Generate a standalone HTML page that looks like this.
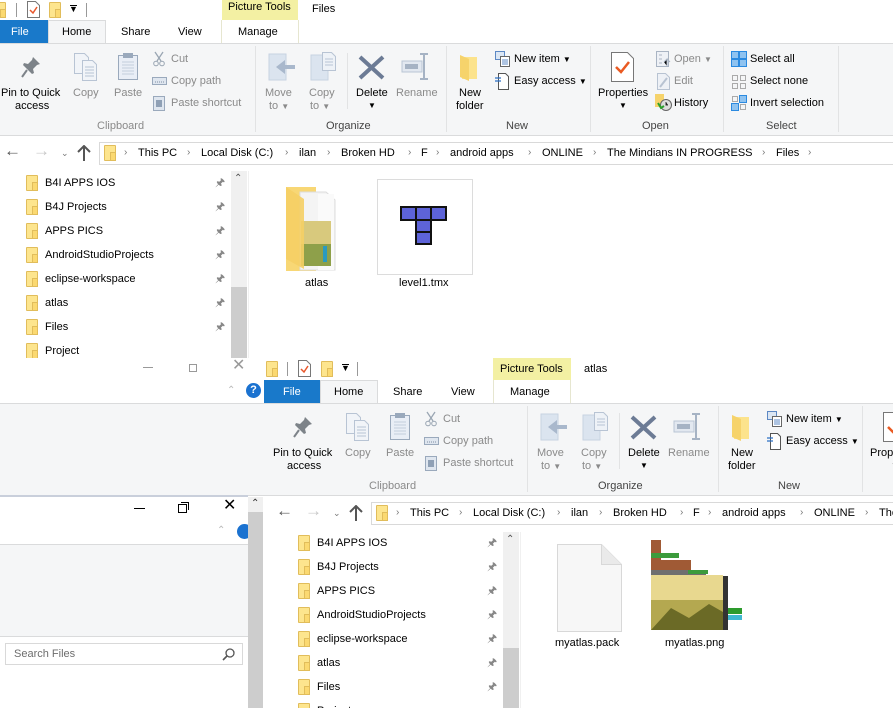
<!DOCTYPE html>
<html><head><meta charset="utf-8">
<style>
*{margin:0;padding:0;box-sizing:border-box}
body{width:893px;height:708px;overflow:hidden;background:#fff;position:relative;font-family:"Liberation Sans",sans-serif;font-size:11px;color:#000}
.a{position:absolute}
.t{position:absolute;white-space:nowrap;font-size:11px;line-height:14px}
.g{color:#8a8a8a}
.win{position:absolute;overflow:hidden}
.fold{position:absolute;width:12px;height:16px;background:#fde58e;border:1px solid #e1bd5b;border-radius:1px}
.fold:after{content:"";position:absolute;right:-1px;bottom:-1px;width:4px;height:7px;border:1px solid #e1bd5b;background:#fbd971}
.chev{position:absolute;font-size:10px;color:#777;line-height:14px}
.sep{position:absolute;width:1px;background:#e2e3e4}
</style></head><body>

<div class="win" style="left:0;top:0;width:893px;height:358px">
 <div class="a" style="left:0;top:0;width:893px;height:43px;background:#fff"></div>
 <div class="fold" style="left:-6px;top:2px"></div>
 <div class="a" style="left:16px;top:3px;width:1px;height:14px;background:#999"></div>
 <svg class="a" style="left:27px;top:1px" width="13" height="17"><path d="M.5 .5h8l4 4v12H.5z" fill="#fff" stroke="#777"/><path d="M3 9l3 3 4-6" fill="none" stroke="#e8562a" stroke-width="1.5"/></svg>
 <div class="fold" style="left:49px;top:2px"></div>
 <div class="t" style="left:69px;top:2px;font-size:9px">&#9660;</div>
 <div class="a" style="left:70px;top:5px;width:7px;height:1px;background:#000"></div>
 <div class="a" style="left:86px;top:3px;width:1px;height:14px;background:#999"></div>
 <div class="a" style="left:222px;top:0;width:76px;height:20px;background:#f3f0a3"></div>
 <div class="t" style="left:228px;top:0">Picture Tools</div>
 <div class="t" style="left:312px;top:2px">Files</div>
 <div class="a" style="left:0;top:20px;width:48px;height:23px;background:#1979ca"></div>
 <div class="t" style="left:11px;top:25px;color:#fff">File</div>
 <div class="a" style="left:48px;top:20px;width:58px;height:24px;background:#f5f6f7;border:1px solid #dadbdc;border-bottom:none"></div>
 <div class="t" style="left:62px;top:25px">Home</div>
 <div class="t" style="left:121px;top:25px">Share</div>
 <div class="t" style="left:178px;top:25px">View</div>
 <div class="a" style="left:221px;top:20px;width:78px;height:23px;border-left:1px solid #e6e6d0;border-right:1px solid #e6e6d0"></div>
 <div class="t" style="left:238px;top:25px">Manage</div>
 <div class="a" style="left:0;top:43px;width:893px;height:93px;background:#f5f6f7;border-top:1px solid #dadbdc;border-bottom:1px solid #dadbdc"></div>
 <div id="rib" class="a" style="left:0;top:0;width:893px;height:136px">
  <svg class="a" style="left:20px;top:55px" width="22" height="24"><path d="M13 2l7 7-3 1-4 4 1 4-2 1-9-9 1-2 4 1 4-4z" fill="#7d8389"/><path d="M7 15l-5 7" stroke="#7d8389" stroke-width="2"/></svg>
  <div class="t" style="left:1px;top:86px">Pin to Quick</div>
  <div class="t" style="left:15px;top:99px">access</div>
  <svg class="a" style="left:73px;top:52px" width="26" height="30"><path d="M1.5 1.5h10l4 4v16h-14z" fill="#f1f4f8" stroke="#b8c4d4"/><path d="M9.5 8.5h10l4 4v16h-14z" fill="#f1f4f8" stroke="#b8c4d4"/><path d="M12 15h9M12 18h9M12 21h9M12 24h9" stroke="#b8c4d4"/></svg>
  <div class="t g" style="left:73px;top:86px">Copy</div>
  <svg class="a" style="left:117px;top:52px" width="22" height="29"><rect x="1.5" y="3.5" width="19" height="24" fill="#e9eef6" stroke="#9aa9bc"/><rect x="6" y="1" width="10" height="5" fill="#9aa9bc"/><path d="M5 10h12M5 13h12M5 16h12M5 19h12M5 22h12" stroke="#c4cfdc"/></svg>
  <div class="t g" style="left:114px;top:86px">Paste</div>
  <svg class="a" style="left:153px;top:51px" width="12" height="16"><path d="M2 1l6 9M10 1L4 10" stroke="#9aa6b3" stroke-width="1.3"/><circle cx="3" cy="12.5" r="2.3" fill="none" stroke="#9aa6b3"/><circle cx="9" cy="12.5" r="2.3" fill="none" stroke="#9aa6b3"/></svg>
  <div class="t g" style="left:171px;top:52px">Cut</div>
  <svg class="a" style="left:152px;top:77px" width="15" height="8"><rect x=".5" y=".5" width="14" height="7" fill="#dfe6ef" stroke="#9aa9bc"/><path d="M3 5h9" stroke="#7f8ea3" stroke-dasharray="1 1"/></svg>
  <div class="t g" style="left:171px;top:74px">Copy path</div>
  <svg class="a" style="left:153px;top:95px" width="12" height="16"><rect x=".5" y="1.5" width="11" height="14" fill="#dfe6ef" stroke="#9aa9bc"/><rect x="3" y="5" width="6" height="7" fill="#8fa0b5"/></svg>
  <div class="t g" style="left:171px;top:96px">Paste shortcut</div>
  <div class="t g" style="left:97px;top:119px">Clipboard</div>
  <div class="sep" style="left:255px;top:46px;height:86px"></div>
  <svg class="a" style="left:268px;top:53px" width="28" height="28"><rect x="1" y="1" width="17" height="26" fill="#dbe4ef" stroke="#c7d3e2"/><path d="M27 12h-10v-5l-9 7 9 7v-5h10z" fill="#a9b8cc"/></svg>
  <div class="t g" style="left:265px;top:86px">Move</div>
  <div class="t g" style="left:269px;top:99px">to <span style="font-size:8px">&#9660;</span></div>
  <svg class="a" style="left:310px;top:51px" width="28" height="30"><rect x="1" y="4" width="17" height="25" fill="#dbe4ef" stroke="#c7d3e2"/><path d="M12.5 1.5h9l4 4v14h-13z" fill="#eef2f7" stroke="#b8c4d4"/><path d="M15 8h8M15 11h8M15 14h8" stroke="#b8c4d4"/></svg>
  <div class="t g" style="left:309px;top:86px">Copy</div>
  <div class="t g" style="left:310px;top:99px">to <span style="font-size:8px">&#9660;</span></div>
  <div class="sep" style="left:347px;top:53px;height:56px"></div>
  <svg class="a" style="left:358px;top:55px" width="27" height="25"><path d="M2 2l23 21M25 2L2 23" stroke="#6c7b95" stroke-width="4"/></svg>
  <div class="t" style="left:356px;top:86px">Delete</div>
  <div class="t" style="left:368px;top:99px;font-size:8px">&#9660;</div>
  <svg class="a" style="left:400px;top:52px" width="31" height="29"><rect x="2" y="9" width="20" height="11" fill="#e2e8f0" stroke="#b9c5d4"/><rect x="5" y="12" width="13" height="5" fill="#a6b3c4"/><path d="M24 3v23M20 2h8M20 27h8" stroke="#a6b3c4" stroke-width="2"/></svg>
  <div class="t g" style="left:396px;top:86px">Rename</div>
  <div class="t" style="left:326px;top:119px;color:#444">Organize</div>
  <div class="sep" style="left:446px;top:46px;height:86px"></div>
  <svg class="a" style="left:459px;top:54px" width="20" height="28"><path d="M3 3h15v22H3z" fill="#fce38c"/><path d="M1 1l9 4v22l-9-4z" fill="#f6d36b"/></svg>
  <div class="t" style="left:459px;top:86px">New</div>
  <div class="t" style="left:456px;top:99px">folder</div>
  <svg class="a" style="left:495px;top:51px" width="16" height="16"><rect x=".5" y=".5" width="9" height="8" fill="#dbe6f3" stroke="#5c88c4"/><rect x="5.5" y="5.5" width="9" height="10" fill="#fff" stroke="#666"/><path d="M7 9h6M7 11h6M7 13h6" stroke="#5c88c4"/></svg>
  <div class="t" style="left:514px;top:52px">New item <span style="font-size:8px">&#9660;</span></div>
  <svg class="a" style="left:495px;top:73px" width="14" height="17"><path d="M3.5 .5h7l3 3v13h-10z" fill="#fff" stroke="#555"/><path d="M0 5h6M0 8h6" stroke="#2c6fc4" stroke-width="1.2"/></svg>
  <div class="t" style="left:514px;top:74px">Easy access <span style="font-size:8px">&#9660;</span></div>
  <div class="t" style="left:506px;top:119px;color:#444">New</div>
  <div class="sep" style="left:590px;top:46px;height:86px"></div>
  <svg class="a" style="left:611px;top:52px" width="23" height="30"><path d="M.5 .5h16l6 6v23H.5z" fill="#fff" stroke="#777"/><path d="M5 15l5 5 8-10" fill="none" stroke="#ea5a22" stroke-width="2.5"/></svg>
  <div class="t" style="left:598px;top:86px">Properties</div>
  <div class="t" style="left:619px;top:99px;font-size:8px">&#9660;</div>
  <svg class="a" style="left:656px;top:51px" width="15" height="16"><rect x=".5" y=".5" width="12" height="15" fill="#eef1f6" stroke="#a9b4c3"/><path d="M3 4h3M3 8h3M3 12h3" stroke="#a9b4c3"/><path d="M11 15V8l-3 3M11 8l3 3" stroke="#a9b4c3"/></svg>
  <div class="t g" style="left:674px;top:52px">Open <span style="font-size:8px">&#9660;</span></div>
  <svg class="a" style="left:657px;top:73px" width="14" height="17"><path d="M.5 .5h8l4 4v12H.5z" fill="#eef1f6" stroke="#b8c3d2"/><path d="M3 14l7-9" stroke="#b8c3d2" stroke-width="2"/></svg>
  <div class="t g" style="left:674px;top:74px">Edit</div>
  <svg class="a" style="left:655px;top:94px" width="17" height="17"><rect x="0" y="0" width="9" height="13" fill="#f6d36b"/><circle cx="11" cy="11" r="5.5" fill="#ddd" stroke="#666"/><path d="M11 8v3h2" stroke="#333"/><path d="M3 9l3 5 3-2" fill="none" stroke="#2ca02c" stroke-width="2"/></svg>
  <div class="t" style="left:674px;top:96px">History</div>
  <div class="t" style="left:642px;top:119px;color:#444">Open</div>
  <div class="sep" style="left:723px;top:46px;height:86px"></div>
  <svg class="a" style="left:731px;top:51px" width="16" height="16"><rect x=".5" y=".5" width="7" height="7" fill="#8fc3f0" stroke="#2b8ae0"/><rect x="8.5" y=".5" width="7" height="7" fill="#8fc3f0" stroke="#2b8ae0"/><rect x=".5" y="8.5" width="7" height="7" fill="#8fc3f0" stroke="#2b8ae0"/><rect x="8.5" y="8.5" width="7" height="7" fill="#8fc3f0" stroke="#2b8ae0"/></svg>
  <div class="t" style="left:750px;top:52px">Select all</div>
  <svg class="a" style="left:731px;top:74px" width="16" height="16"><rect x="1.5" y="1.5" width="5" height="5" fill="none" stroke="#aaa"/><rect x="9.5" y="1.5" width="5" height="5" fill="none" stroke="#aaa"/><rect x="1.5" y="9.5" width="5" height="5" fill="none" stroke="#aaa"/><rect x="9.5" y="9.5" width="5" height="5" fill="none" stroke="#aaa"/></svg>
  <div class="t" style="left:750px;top:74px">Select none</div>
  <svg class="a" style="left:731px;top:95px" width="16" height="16"><rect x="1.5" y="1.5" width="5" height="5" fill="none" stroke="#aaa"/><rect x="8.5" y=".5" width="7" height="7" fill="#8fc3f0" stroke="#2b8ae0"/><rect x=".5" y="8.5" width="7" height="7" fill="#8fc3f0" stroke="#2b8ae0"/><rect x="9.5" y="9.5" width="5" height="5" fill="none" stroke="#aaa"/></svg>
  <div class="t" style="left:750px;top:96px">Invert selection</div>
  <div class="t" style="left:766px;top:119px;color:#444">Select</div>
  <div class="sep" style="left:838px;top:46px;height:86px"></div>
 </div>
 <div class="t" style="left:4px;top:144px;font-size:17px;color:#555">&#8592;</div>
 <div class="t" style="left:33px;top:144px;font-size:17px;color:#c8c8c8">&#8594;</div>
 <div class="t" style="left:61px;top:146px;font-size:9px;color:#777">&#8964;</div>
 <svg class="a" style="left:77px;top:145px" width="14" height="16"><path d="M7 1v15M1 7l6-6 6 6" fill="none" stroke="#555" stroke-width="2"/></svg>
 <div class="a" style="left:99px;top:142px;width:800px;height:23px;border:1px solid #d9d9d9;background:#fff"></div>
 <div class="fold" style="left:104px;top:145px"></div>
 <div class="chev" style="left:124px;top:146px">&#8250;</div>
 <div class="t" style="left:138px;top:146px">This PC</div>
 <div class="chev" style="left:187px;top:146px">&#8250;</div>
 <div class="t" style="left:201px;top:146px">Local Disk (C:)</div>
 <div class="chev" style="left:285px;top:146px">&#8250;</div>
 <div class="t" style="left:299px;top:146px">ilan</div>
 <div class="chev" style="left:327px;top:146px">&#8250;</div>
 <div class="t" style="left:341px;top:146px">Broken HD</div>
 <div class="chev" style="left:408px;top:146px">&#8250;</div>
 <div class="t" style="left:421px;top:146px">F</div>
 <div class="chev" style="left:436px;top:146px">&#8250;</div>
 <div class="t" style="left:450px;top:146px">android apps</div>
 <div class="chev" style="left:528px;top:146px">&#8250;</div>
 <div class="t" style="left:542px;top:146px">ONLINE</div>
 <div class="chev" style="left:593px;top:146px">&#8250;</div>
 <div class="t" style="left:607px;top:146px">The Mindians IN PROGRESS</div>
 <div class="chev" style="left:762px;top:146px">&#8250;</div>
 <div class="t" style="left:776px;top:146px">Files</div>
 <div class="chev" style="left:808px;top:146px">&#8250;</div>
 <div class="fold" style="left:26px;top:175px"></div><div class="t" style="left:45px;top:176px">B4I APPS IOS</div>
 <div class="fold" style="left:26px;top:199px"></div><div class="t" style="left:45px;top:200px">B4J Projects</div>
 <div class="fold" style="left:26px;top:223px"></div><div class="t" style="left:45px;top:224px">APPS PICS</div>
 <div class="fold" style="left:26px;top:247px"></div><div class="t" style="left:45px;top:248px">AndroidStudioProjects</div>
 <div class="fold" style="left:26px;top:271px"></div><div class="t" style="left:45px;top:272px">eclipse-workspace</div>
 <div class="fold" style="left:26px;top:295px"></div><div class="t" style="left:45px;top:296px">atlas</div>
 <div class="fold" style="left:26px;top:319px"></div><div class="t" style="left:45px;top:320px">Files</div>
 <div class="fold" style="left:26px;top:343px"></div><div class="t" style="left:45px;top:344px">Project</div>
 <div class="t" style="left:215px;top:176px;color:#888">&#128392;</div>
 <div class="t" style="left:215px;top:200px;color:#888">&#128392;</div>
 <div class="t" style="left:215px;top:224px;color:#888">&#128392;</div>
 <div class="t" style="left:215px;top:248px;color:#888">&#128392;</div>
 <div class="t" style="left:215px;top:272px;color:#888">&#128392;</div>
 <div class="t" style="left:215px;top:296px;color:#888">&#128392;</div>
 <div class="t" style="left:215px;top:320px;color:#888">&#128392;</div>
 <div class="a" style="left:231px;top:171px;width:16px;height:187px;background:#f0f0f0"></div>
 <div class="t" style="left:234px;top:172px;font-size:10px;color:#555">&#8963;</div>
 <div class="a" style="left:231px;top:287px;width:16px;height:71px;background:#cdcdcd"></div>
 <div class="a" style="left:248px;top:171px;width:1px;height:187px;background:#f0f0f0"></div>
 <svg class="a" style="left:285px;top:186px" width="66" height="86"><path d="M1 1h30v84H1z" fill="#f8d775"/><path d="M15 6h26l9 8v70H15z" fill="#f4f4f4" stroke="#ddd"/><path d="M33 8h16v76H33z" fill="#fafafa"/><rect x="16" y="35" width="30" height="45" fill="#d8c97d"/><rect x="16" y="58" width="30" height="22" fill="#8ea04a"/><rect x="38" y="60" width="4" height="16" fill="#2a9ac0"/><path d="M1 1l18 12v70L1 73z" fill="#f5cf65" opacity=".9"/></svg>
 <div class="t" style="left:305px;top:276px">atlas</div>
 <div class="a" style="left:377px;top:179px;width:96px;height:96px;border:1px solid #dcdcdc"></div>
 <svg class="a" style="left:400px;top:206px" width="48" height="40"><g fill="#5d63d8" stroke="#111" stroke-width="2"><rect x="1" y="1" width="15" height="13"/><rect x="16" y="1" width="15" height="13"/><rect x="31" y="1" width="15" height="13"/><rect x="16" y="14" width="15" height="12"/><rect x="16" y="26" width="15" height="12"/></g></svg>
 <div class="t" style="left:399px;top:276px">level1.tmx</div>
</div>

<div class="a" style="left:0;top:358px;width:263px;height:46px;background:#fff"></div>
<div class="a" style="left:143px;top:367px;width:10px;height:1px;background:#999"></div>
<div class="a" style="left:189px;top:364px;width:8px;height:8px;border:1px solid #999"></div>
<div class="t" style="left:232px;top:359px;font-size:16px;color:#999">&#10005;</div>
<div class="t" style="left:227px;top:384px;font-size:10px;color:#bbb">&#8963;</div>
<div class="a" style="left:246px;top:383px;width:15px;height:15px;border-radius:50%;background:#1b72d0;color:#fff;font-size:11px;font-weight:bold;text-align:center;line-height:15px">?</div>

<div class="win" style="left:263px;top:358px;width:630px;height:350px">
 <div class="a" style="left:-263px;top:0;width:893px;height:350px">
  <div class="fold" style="left:266px;top:3px"></div>
  <div class="a" style="left:287px;top:4px;width:1px;height:14px;background:#999"></div>
  <svg class="a" style="left:298px;top:2px" width="13" height="17"><path d="M.5 .5h8l4 4v12H.5z" fill="#fff" stroke="#777"/><path d="M3 9l3 3 4-6" fill="none" stroke="#e8562a" stroke-width="1.5"/></svg>
  <div class="fold" style="left:321px;top:3px"></div>
  <div class="a" style="left:342px;top:6px;width:7px;height:1px;background:#000"></div>
  <div class="t" style="left:341px;top:3px;font-size:9px">&#9660;</div>
  <div class="a" style="left:357px;top:4px;width:1px;height:14px;background:#999"></div>
  <div class="a" style="left:493px;top:0;width:78px;height:22px;background:#f3f0a3"></div>
  <div class="t" style="left:500px;top:4px">Picture Tools</div>
  <div class="t" style="left:584px;top:4px">atlas</div>
  <div class="a" style="left:264px;top:22px;width:56px;height:23px;background:#1979ca"></div>
  <div class="t" style="left:283px;top:27px;color:#fff">File</div>
  <div class="a" style="left:320px;top:22px;width:58px;height:24px;background:#f5f6f7;border:1px solid #dadbdc;border-bottom:none"></div>
  <div class="t" style="left:334px;top:27px">Home</div>
  <div class="t" style="left:393px;top:27px">Share</div>
  <div class="t" style="left:451px;top:27px">View</div>
  <div class="a" style="left:493px;top:22px;width:78px;height:23px;border-left:1px solid #e6e6d0;border-right:1px solid #e6e6d0"></div>
  <div class="t" style="left:510px;top:27px">Manage</div>
 </div>
</div>
<div class="a" style="left:0;top:403px;width:893px;height:93px;background:#f5f6f7;border-top:1px solid #dadbdc;border-bottom:1px solid #dadbdc"></div>
<div class="win" style="left:263px;top:404px;width:630px;height:92px">
 <div class="a" style="left:9px;top:-44px;width:893px;height:136px" id="rib2"></div>
</div>
<div class="win" style="left:263px;top:496px;width:630px;height:212px;background:#fff">
 <div class="a" style="left:-263px;top:-496px;width:893px;height:708px">
  <div class="t" style="left:276px;top:504px;font-size:17px;color:#555">&#8592;</div>
  <div class="t" style="left:305px;top:504px;font-size:17px;color:#c8c8c8">&#8594;</div>
  <div class="t" style="left:333px;top:506px;font-size:9px;color:#777">&#8964;</div>
  <svg class="a" style="left:349px;top:505px" width="14" height="16"><path d="M7 1v15M1 7l6-6 6 6" fill="none" stroke="#555" stroke-width="2"/></svg>
  <div class="a" style="left:371px;top:502px;width:540px;height:23px;border:1px solid #d9d9d9;background:#fff"></div>
  <div class="fold" style="left:376px;top:505px"></div>
  <div class="chev" style="left:396px;top:506px">&#8250;</div>
  <div class="t" style="left:410px;top:506px">This PC</div>
  <div class="chev" style="left:459px;top:506px">&#8250;</div>
  <div class="t" style="left:473px;top:506px">Local Disk (C:)</div>
  <div class="chev" style="left:557px;top:506px">&#8250;</div>
  <div class="t" style="left:571px;top:506px">ilan</div>
  <div class="chev" style="left:599px;top:506px">&#8250;</div>
  <div class="t" style="left:613px;top:506px">Broken HD</div>
  <div class="chev" style="left:680px;top:506px">&#8250;</div>
  <div class="t" style="left:693px;top:506px">F</div>
  <div class="chev" style="left:708px;top:506px">&#8250;</div>
  <div class="t" style="left:722px;top:506px">android apps</div>
  <div class="chev" style="left:800px;top:506px">&#8250;</div>
  <div class="t" style="left:814px;top:506px">ONLINE</div>
  <div class="chev" style="left:865px;top:506px">&#8250;</div>
  <div class="t" style="left:879px;top:506px">The</div>
  <div class="fold" style="left:298px;top:535px"></div><div class="t" style="left:317px;top:536px">B4I APPS IOS</div>
  <div class="fold" style="left:298px;top:559px"></div><div class="t" style="left:317px;top:560px">B4J Projects</div>
  <div class="fold" style="left:298px;top:583px"></div><div class="t" style="left:317px;top:584px">APPS PICS</div>
  <div class="fold" style="left:298px;top:607px"></div><div class="t" style="left:317px;top:608px">AndroidStudioProjects</div>
  <div class="fold" style="left:298px;top:631px"></div><div class="t" style="left:317px;top:632px">eclipse-workspace</div>
  <div class="fold" style="left:298px;top:655px"></div><div class="t" style="left:317px;top:656px">atlas</div>
  <div class="fold" style="left:298px;top:679px"></div><div class="t" style="left:317px;top:680px">Files</div>
  <div class="fold" style="left:298px;top:703px"></div><div class="t" style="left:317px;top:704px">Project</div>
  <div class="t" style="left:487px;top:536px;color:#888">&#128392;</div>
  <div class="t" style="left:487px;top:560px;color:#888">&#128392;</div>
  <div class="t" style="left:487px;top:584px;color:#888">&#128392;</div>
  <div class="t" style="left:487px;top:608px;color:#888">&#128392;</div>
  <div class="t" style="left:487px;top:632px;color:#888">&#128392;</div>
  <div class="t" style="left:487px;top:656px;color:#888">&#128392;</div>
  <div class="t" style="left:487px;top:680px;color:#888">&#128392;</div>
  <div class="a" style="left:503px;top:532px;width:16px;height:176px;background:#f0f0f0"></div>
  <div class="t" style="left:506px;top:533px;font-size:10px;color:#555">&#8963;</div>
  <div class="a" style="left:503px;top:648px;width:16px;height:60px;background:#cdcdcd"></div>
  <div class="a" style="left:520px;top:532px;width:1px;height:176px;background:#f0f0f0"></div>
  <svg class="a" style="left:557px;top:544px" width="65" height="88"><path d="M.5 .5h44l20 20v67H.5z" fill="#f7f7f7" stroke="#d8d8d8"/><path d="M44.5 .5v20h20" fill="#eaeaea" stroke="#d8d8d8"/></svg>
  <div class="t" style="left:555px;top:636px">myatlas.pack</div>
  <svg class="a" style="left:650px;top:540px" width="93" height="92"><rect x="0" y="0" width="93" height="92" fill="#fff"/><rect x="1" y="35" width="72" height="55" fill="#e8d88f"/><rect x="1" y="60" width="72" height="30" fill="#b4a850"/><path d="M1 90l20-22 18 10 20-14 14 8v18z" fill="#6b6a26"/><rect x="1" y="0" width="10" height="35" fill="#a05a35"/><rect x="1" y="20" width="40" height="10" fill="#a05a35"/><rect x="1" y="30" width="55" height="5" fill="#6f6f6f"/><rect x="1" y="13" width="28" height="5" fill="#3c9b3c"/><rect x="38" y="30" width="20" height="4" fill="#3c9b3c"/><rect x="73" y="36" width="5" height="54" fill="#333"/><rect x="78" y="75" width="14" height="5" fill="#3fb8d0"/><rect x="78" y="68" width="14" height="6" fill="#2d9b2d"/></svg>
  <div class="t" style="left:665px;top:636px">myatlas.png</div>
 </div>
</div>

<div class="a" style="left:0;top:495px;width:248px;height:2px;background:#c9cfdb"></div>
<div class="a" style="left:0;top:497px;width:248px;height:211px;background:#fff"></div>
<div class="a" style="left:134px;top:508px;width:11px;height:1px;background:#000"></div>
<div class="a" style="left:178px;top:504px;width:9px;height:9px;border:1px solid #000;background:#fff"></div>
<div class="a" style="left:181px;top:502px;width:8px;height:8px;border-top:1px solid #000;border-right:1px solid #000"></div>
<div class="t" style="left:223px;top:499px;font-size:16px">&#10005;</div>
<div class="t" style="left:217px;top:524px;font-size:10px;color:#bbb">&#8963;</div>
<div class="a" style="left:237px;top:524px;width:15px;height:15px;border-radius:50%;background:#1b72d0"></div>
<div class="a" style="left:0;top:544px;width:248px;height:93px;background:#f5f6f7;border-top:1px solid #dadbdc;border-bottom:1px solid #dadbdc"></div>
<div class="a" style="left:5px;top:643px;width:238px;height:22px;border:1px solid #d9d9d9;background:#fff"></div>
<div class="t" style="left:14px;top:647px;color:#6d6d6d">Search Files</div>
<svg class="a" style="left:222px;top:647px" width="14" height="14"><circle cx="8" cy="6" r="4" fill="none" stroke="#555" stroke-width="1.3"/><path d="M5 9l-4 4" stroke="#555" stroke-width="1.6"/></svg>
<div class="a" style="left:248px;top:497px;width:15px;height:211px;background:#cdcdcd"></div>
<div class="a" style="left:248px;top:497px;width:15px;height:15px;background:#f0f0f0"></div>
<div class="t" style="left:251px;top:497px;font-size:10px;color:#333">&#8963;</div>

<script>
var r=document.getElementById('rib'),t=document.getElementById('rib2');
if(r&&t){t.innerHTML=r.innerHTML;}
</script>
</body></html>
